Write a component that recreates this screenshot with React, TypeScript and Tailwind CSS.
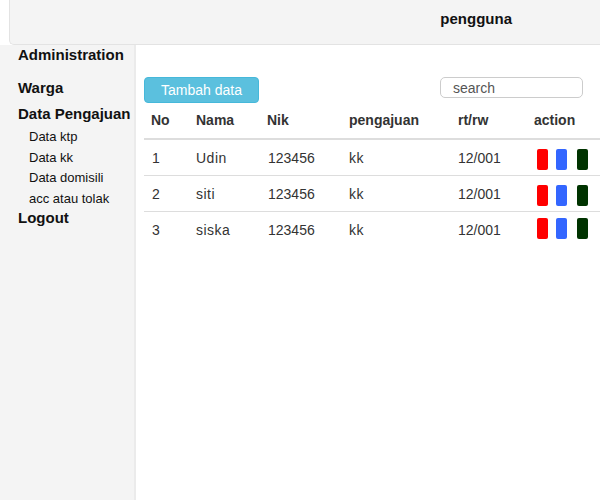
export default function App() {
  const rows = [
    { no: "1", nama: "Udin", nik: "123456", p: "kk", rt: "12/001", off: "mt-[3px]" },
    { no: "2", nama: "siti", nik: "123456", p: "kk", rt: "12/001", off: "mt-[3px]" },
    { no: "3", nama: "siska", nik: "123456", p: "kk", rt: "12/001", off: "-mt-[4px]" },
  ];
  const cols = "grid grid-cols-[45px_71px_82px_109px_76px_1fr]";
  return (
    <div className="w-[600px] h-[500px] bg-white flex flex-col overflow-hidden text-[#333]" style={{ fontFamily: '"Liberation Sans", Arial, sans-serif' }}>
      <div className="h-[45px] ml-[9px] bg-[#f4f4f4] border-l border-b border-[#e3e3e3] rounded-bl-[5px] flex items-center justify-end pr-[88px] pb-[5px] shrink-0">
        <span className="text-[15px] font-bold text-[#111]">pengguna</span>
      </div>
      <div className="flex flex-1 min-h-0">
        <div className="w-[136px] bg-[#f4f4f4] border-r-2 border-[#ebebeb] shrink-0 pl-[18px] text-[#111]">
          <div className="text-[15px] font-bold leading-[20px]">Administration</div>
          <div className="text-[15px] font-bold leading-[20px] mt-[13px]">Warga</div>
          <div className="text-[15px] font-bold leading-[20px] mt-[6px]">Data Pengajuan</div>
          <div className="pl-[11px] mt-[3px] text-[13px]">
            <div className="leading-[20.7px]">Data ktp</div>
            <div className="leading-[20.7px]">Data kk</div>
            <div className="leading-[20.7px]">Data domisili</div>
            <div className="leading-[20.7px]">acc atau tolak</div>
          </div>
          <div className="text-[15px] font-bold leading-[15px]">Logout</div>
        </div>
        <div className="flex-1 pl-[8px] pt-[32px]">
          <div className="flex items-start justify-between pr-[17px]">
            <button className="w-[115px] h-[26px] bg-[#5bc0de] border border-[#46b8da] rounded-[4px] text-white text-[14px]">Tambah data</button>
            <div className="w-[143px] h-[21px] border border-[#cccccc] rounded-[5px] flex items-center pl-[12px] pt-[1px] text-[14px] text-[#555]">search</div>
          </div>
          <div className={`${cols} h-[37px] items-center text-[14px] font-bold border-b-2 border-[#dddddd] text-[#333]`}>
            <div className="pl-[7px]">No</div>
            <div className="pl-[7px]">Nama</div>
            <div className="pl-[7px]">Nik</div>
            <div className="pl-[7px]">pengajuan</div>
            <div className="pl-[7px]">rt/rw</div>
            <div className="pl-[7px]">action</div>
          </div>
          {rows.map((r, i) => (
            <div key={r.no} className={`${cols} h-[36px] items-center text-[14px] text-[#333] ${i < 2 ? "border-b border-[#dddddd]" : ""}`}>
              <div className="pl-[8px] pt-[1px]">{r.no}</div>
              <div className="pl-[7px] pt-[1px] tracking-[0.5px]">{r.nama}</div>
              <div className="pl-[8px] pt-[1px]">{r.nik}</div>
              <div className="pl-[7px] pt-[1px] tracking-[0.5px]">{r.p}</div>
              <div className="pl-[7px] pt-[1px]">{r.rt}</div>
              <div className={`pl-[10px] flex items-center ${r.off}`}>
                <span className="w-[11px] h-[21px] bg-[#ff0000] rounded-[2px]"></span>
                <span className="w-[11px] h-[21px] bg-[#3366ff] rounded-[2px] ml-[8px]"></span>
                <span className="w-[11px] h-[21px] bg-[#003300] rounded-[2px] ml-[10px]"></span>
              </div>
            </div>
          ))}
        </div>
      </div>
    </div>
  );
}
